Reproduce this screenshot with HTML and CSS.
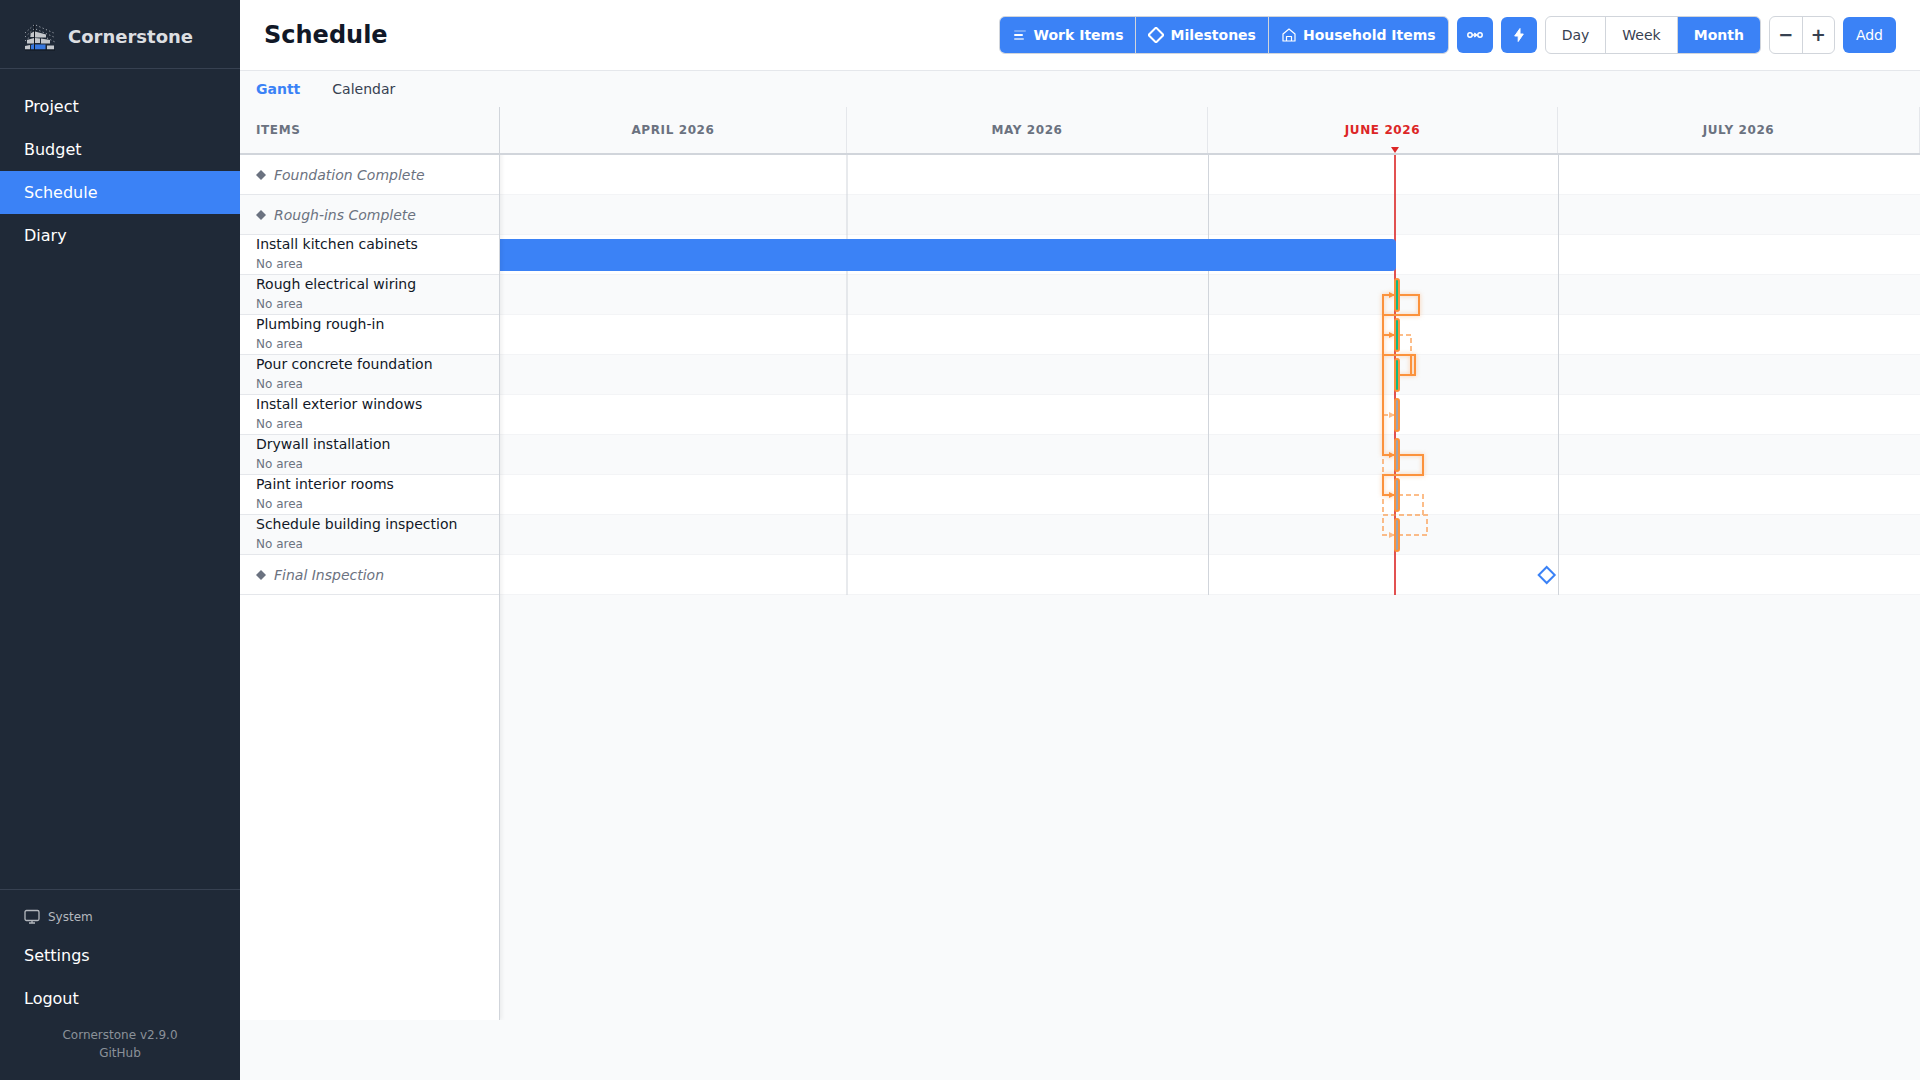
FILE: index.html
```html
<!DOCTYPE html>
<html lang="en">

<head>
    <meta charset="UTF-8" />
    <meta name="viewport" content="width=device-width, initial-scale=1.0">
    <title>Schedule - Cornerstone</title>
    <link rel="stylesheet" href="styles.css">
</head>

<body>
    <div class="app">
        <aside class="sidebar">
            <div class="logo">
                <svg class="logo-icon" width="32" height="32" viewBox="0 0 32 32">
                    <g fill="none" stroke="#a3a8b0" stroke-dasharray="1.2 2.4">
                        <path d="M1 13L10.5 4.5L31 13.5" />
                        <path d="M1 17L10.5 8.5L31 17.5" />
                        <path d="M1 21L7 16" />
                        <path d="M23 18L31 22" />
                    </g>
                    <path d="M6.5 13.5L10 11.5V17H6.5zM11 11.5L22 14.5V17.5H11zM3 20L10 18V23.5H3zM11 18L16 18.5V23H11zM17 18.5L26 20V23.5H17zM1 26L6 25V29.5H1zM23 25.5H30V29.5H23z" fill="#c4c7cc" />
                    <path d="M7 25L10 24V29.5H7zM11 24.5H21.5V29.5H11z" fill="#3878e0" />
                    <path d="M10.5 4.5V29.5M1 30H31" stroke="#11161f" />
                </svg>
                <span class="logo-text">Cornerstone</span>
            </div>
            <nav class="nav">
                <a href="#">Project</a>
                <a href="#">Budget</a>
                <a href="#" class="active">Schedule</a>
                <a href="#">Diary</a>
            </nav>
            <div class="sidebar-bottom">
                <button class="theme">
                    <svg width="16" height="16" viewBox="0 0 16 16" fill="none" stroke="currentColor">
                        <rect x="1" y="1.5" width="14" height="10" rx="1.5" stroke-width="1.3" />
                        <path d="M8 12v2M5 14h6" stroke-width="1.3" />
                    </svg>
                    <span>System</span>
                </button>
                <a href="#">Settings</a>
                <button class="logout">Logout</button>
                <div class="version">
                    <span>Cornerstone v2.9.0</span>
                    <a href="#">GitHub</a>
                </div>
            </div>
        </aside>

        <main class="main">
            <header class="page-header">
                <h1>Schedule</h1>
                <div class="toolbar">
                    <div class="group filters">
                        <button>
                            <svg width="16" height="16" viewBox="0 0 16 16" stroke="#fff" stroke-width="2" stroke-linecap="round">
                                <path d="M3 4h10" opacity="0.3" />
                                <path d="M3 8h7" />
                                <path d="M3 12h8" opacity="0.6" />
                            </svg>
                            Work Items
                        </button>
                        <button>
                            <svg width="16" height="16" viewBox="0 0 16 16" fill="none" stroke="#fff" stroke-width="2">
                                <path d="M8 .5L15.5 8L8 15.5L.5 8z" />
                            </svg>
                            Milestones
                        </button>
                        <button>
                            <svg width="16" height="16" viewBox="0 0 16 16" fill="none" stroke="#fff" stroke-width="1.2" stroke-linejoin="round">
                                <path d="M2 7L8 2L14 7V14H2z" />
                                <path d="M5.5 14V9.5H10.5V14" />
                            </svg>
                            Household Items
                        </button>
                    </div>
                    <button class="icon-btn" aria-label="Show dependency arrows">
                        <svg width="20" height="20" viewBox="0 0 20 20" fill="none" stroke="#fff" stroke-width="1.5">
                            <circle cx="5" cy="10" r="2.2" />
                            <circle cx="15" cy="10" r="2.2" />
                            <path d="M7.2 10H12.5M9.3 8L11.5 10L9.3 12" />
                        </svg>
                    </button>
                    <button class="icon-btn" aria-label="Show critical path">
                        <svg width="20" height="20" viewBox="0 0 20 20" fill="#fff" stroke="#fff" stroke-linejoin="round">
                            <path d="M11 3.5L5.7 11H9.2V16.5L14.3 9H11z" />
                        </svg>
                    </button>
                    <div class="group zoom-levels">
                        <button>Day</button>
                        <button>Week</button>
                        <button class="active">Month</button>
                    </div>
                    <div class="group zoom-steps">
                        <button aria-label="Zoom out">−</button>
                        <button aria-label="Zoom in">+</button>
                    </div>
                    <button class="add-btn">Add</button>
                </div>
            </header>

            <nav class="tabs">
                <a href="#" class="active">Gantt</a>
                <a href="#">Calendar</a>
            </nav>

            <div class="gantt">
                <div class="items">
                    <div class="items-header">Items</div>
                    <div class="item milestone"><svg width="10" height="10" viewBox="0 0 10 10"><path d="M5 0L10 5L5 10L0 5z" /></svg>Foundation Complete</div>
                    <div class="item milestone"><svg width="10" height="10" viewBox="0 0 10 10"><path d="M5 0L10 5L5 10L0 5z" /></svg>Rough-ins Complete</div>
                    <div class="item">Install kitchen cabinets<small>No area</small></div>
                    <div class="item">Rough electrical wiring<small>No area</small></div>
                    <div class="item">Plumbing rough-in<small>No area</small></div>
                    <div class="item">Pour concrete foundation<small>No area</small></div>
                    <div class="item">Install exterior windows<small>No area</small></div>
                    <div class="item">Drywall installation<small>No area</small></div>
                    <div class="item">Paint interior rooms<small>No area</small></div>
                    <div class="item">Schedule building inspection<small>No area</small></div>
                    <div class="item milestone"><svg width="10" height="10" viewBox="0 0 10 10"><path d="M5 0L10 5L5 10L0 5z" /></svg>Final Inspection</div>
                </div>

                <div class="timeline">
                    <div class="months">
                        <div>April 2026</div>
                        <div>May 2026</div>
                        <div class="current">June 2026</div>
                        <div>July 2026</div>
                        <span class="today-mark"></span>
                    </div>
                    <svg class="chart" height="440">
                        <defs>
                            <pattern id="rows" width="100" height="80" patternUnits="userSpaceOnUse">
                                <rect width="100" height="40" fill="#fff" />
                                <rect y="40" width="100" height="40" fill="#f9fafb" />
                                <path d="M0 39.5H100M0 79.5H100" stroke="#f3f4f6" />
                            </pattern>
                            <marker id="arrow" markerUnits="userSpaceOnUse" markerWidth="6" markerHeight="6" refX="5" refY="3" orient="auto">
                                <path d="M0 0L6 3L0 6z" fill="#fb923c" />
                            </marker>
                        </defs>
                        <rect width="100%" height="440" fill="url(#rows)" />
                        <path class="grid-line" d="M347 0V440M708.5 0V440M1058.5 0V440" />
                        <path class="today-line" d="M895 0V440" />

                        <!-- dependencies -->
                        <g class="dep">
                            <path d="M898 180H911V200" />
                            <path d="M883 220V260H894" marker-end="url(#arrow)" />
                            <path d="M898 380H927V360H883V300" />
                            <path d="M898 340H923V360H883V380H894" marker-end="url(#arrow)" />
                        </g>
                        <g class="dep critical">
                            <path d="M898 140H919V160H883V300H894" marker-end="url(#arrow)" />
                            <path d="M898 220H915V200H883V140H894" marker-end="url(#arrow)" />
                            <path d="M898 220H911V200H883V180H894" marker-end="url(#arrow)" />
                            <path d="M898 300H923V320H883V340H894" marker-end="url(#arrow)" />
                        </g>

                        <!-- bars -->
                        <path d="M0 84H892A4 4 0 0 1 896 88V112A4 4 0 0 1 892 116H0z" fill="#3b82f6" />
                        <g class="bar done">
                            <rect x="895" y="124" width="4" height="32" rx="2" />
                            <rect x="895" y="164" width="4" height="32" rx="2" />
                            <rect x="895" y="204" width="4" height="32" rx="2" />
                        </g>
                        <g class="bar">
                            <rect x="895" y="244" width="4" height="32" rx="2" />
                            <rect x="895" y="284" width="4" height="32" rx="2" />
                            <rect x="895" y="324" width="4" height="32" rx="2" />
                            <rect x="895" y="364" width="4" height="32" rx="2" />
                        </g>
                        <path class="diamond" d="M1046.7 412L1054.7 420L1046.7 428L1038.7 420z" />
                    </svg>
                </div>
            </div>
        </main>
    </div>
</body>

</html>
```

FILE: styles.css
```css
* {
    box-sizing: border-box;
}

body {
    margin: 0;
    font-family: "DejaVu Sans", sans-serif;
    font-size: 14px;
    color: #111827;
    background-color: #f9fafb;
}

a {
    text-decoration: none;
    color: inherit;
}

button {
    font: inherit;
    color: inherit;
    background: none;
    border: none;
    padding: 0;
    cursor: pointer;
}

.app {
    display: flex;
    min-height: 100vh;
}

/* sidebar */
.sidebar {
    width: 240px;
    flex-shrink: 0;
    display: flex;
    flex-direction: column;
    background-color: #1f2937;
    color: #fff;
    font-size: 16px;
}

.logo {
    display: flex;
    align-items: center;
    gap: 12px;
    height: 69px;
    padding: 4px 24px 0;
    border-bottom: 1px solid #374151;
}

.logo-text {
    font-size: 18px;
    font-weight: bold;
    color: #dcdee1;
}

.nav {
    flex: 1;
    padding-top: 16px;
}

.nav a,
.sidebar-bottom > a,
.logout {
    display: block;
    width: 100%;
    padding: 12px 24px;
    line-height: 19px;
    text-align: left;
}

.nav a.active {
    background-color: #3b82f6;
}

.sidebar-bottom {
    border-top: 1px solid #374151;
    padding: 10px 0 18px;
}

.theme {
    display: flex;
    align-items: center;
    gap: 8px;
    height: 34px;
    padding: 0 24px;
    font-size: 12px;
    color: #b4b8be;
}

.version {
    display: flex;
    flex-direction: column;
    align-items: center;
    padding: 6px 0 0;
    font-size: 12px;
    line-height: 18px;
    color: #8b9199;
}

/* header */
.main {
    flex: 1;
    min-width: 0;
    display: flex;
    flex-direction: column;
    padding-bottom: 60px;
}

.page-header {
    display: flex;
    align-items: center;
    justify-content: space-between;
    height: 71px;
    padding: 0 24px;
    background-color: #fff;
    border-bottom: 1px solid #e5e7eb;
}

h1 {
    margin: 0;
    font-size: 24px;
}

.toolbar {
    display: flex;
    align-items: center;
    gap: 8px;
}

.group {
    display: flex;
    height: 38px;
    border: 1px solid #d1d5db;
    border-radius: 6px;
    overflow: hidden;
    color: #374151;
}

.group button + button {
    border-left: 1px solid #d1d5db;
}

.filters button {
    display: flex;
    align-items: center;
    gap: 6px;
    padding: 0 12px;
    font-weight: bold;
    color: #fff;
    background-color: #3b82f6;
}

.zoom-levels button {
    padding: 0 16px;
}

.zoom-levels .active {
    font-weight: bold;
    color: #fff;
    background-color: #3b82f6;
}

.zoom-steps button {
    width: 32px;
    padding-bottom: 2px;
    font-size: 18px;
    font-weight: bold;
}

.icon-btn,
.add-btn {
    display: flex;
    align-items: center;
    justify-content: center;
    height: 36px;
    border-radius: 6px;
    color: #fff;
    background-color: #3b82f6;
}

.icon-btn {
    width: 36px;
}

.add-btn {
    padding: 0 13px;
}

.tabs {
    display: flex;
    align-items: center;
    gap: 32px;
    height: 36px;
    padding: 0 16px;
    color: #374151;
}

.tabs .active {
    font-weight: bold;
    color: #3b82f6;
}

/* gantt */
.gantt {
    flex: 1;
    display: flex;
    overflow: hidden;
}

.items {
    position: relative;
    width: 260px;
    flex-shrink: 0;
    background-color: #fff;
    border-right: 1px solid #d1d5db;
    box-shadow: 2px 0 4px rgba(0, 0, 0, 0.06);
}

.items-header,
.months {
    height: 48px;
    background-color: #f9fafb;
    border-bottom: 2px solid #d1d5db;
    font-size: 12px;
    font-weight: bold;
    letter-spacing: 0.6px;
    text-transform: uppercase;
    color: #6b7280;
}

.items-header {
    display: flex;
    align-items: center;
    padding: 0 16px;
}

.item {
    display: flex;
    flex-direction: column;
    justify-content: center;
    height: 40px;
    padding: 0 16px 2px;
    line-height: 20px;
    border-bottom: 1px solid #e5e7eb;
}

.item:nth-child(odd) {
    background-color: #f9fafb;
}

.item small {
    font-size: 12px;
    color: #6b7280;
}

.item.milestone {
    flex-direction: row;
    justify-content: flex-start;
    align-items: center;
    gap: 8px;
    padding-bottom: 0;
    font-style: italic;
    color: #6b7280;
}

.item svg {
    fill: currentColor;
}

.timeline {
    flex: 1;
    min-width: 0;
}

.months {
    position: relative;
    display: grid;
    grid-template-columns: 347px 361px 350px 362px;
}

.months div {
    display: flex;
    align-items: center;
    justify-content: center;
    border-right: 1px solid #e5e7eb;
}

.months .current {
    color: #dc2626;
}

.today-mark {
    position: absolute;
    left: 891px;
    bottom: 0;
    border: 4px solid transparent;
    border-top: 6px solid #dc2626;
    border-bottom: none;
}

.chart {
    display: block;
    width: 100%;
}

.grid-line {
    stroke: #d1d5db;
}

.today-line {
    stroke: #dc2626;
    stroke-width: 2;
    opacity: 0.8;
}

.dep {
    fill: none;
    stroke: #fb923c;
    stroke-width: 2;
    stroke-dasharray: 5 3;
    opacity: 0.6;
}

.dep.critical {
    stroke-dasharray: none;
    opacity: 1;
    filter: drop-shadow(0 0 2px rgba(251, 146, 60, 0.5));
}

.bar rect {
    fill: #9ca3af;
    stroke: #fb923c;
    stroke-width: 2;
}

.bar.done rect {
    fill: #10b981;
}

.diamond {
    fill: #fff;
    stroke: #3b82f6;
    stroke-width: 2;
}
```
